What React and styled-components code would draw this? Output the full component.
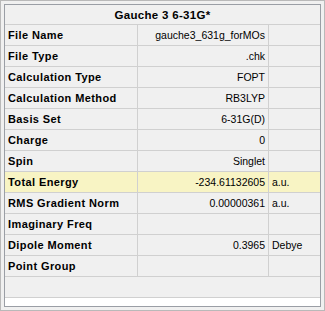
import React from "react";
import styled, { createGlobalStyle } from "styled-components";

const Global = createGlobalStyle`
  html, body { margin: 0; padding: 0; background: #f0f0f0; }
  * { box-sizing: border-box; }
`;

const Frame = styled.div`
  width: 325px;
  height: 311px;
  border: 1px solid #b9b9b9;
  background: #f0f0f0;
  padding: 3px;
`;

const Table = styled.div`
  height: 100%;
  border: 1px solid #9a9ea5;
  background: #ffffff;
  display: flex;
  flex-direction: column;
  font-family: "Liberation Sans", Arial, sans-serif;
  color: #000;
`;

const Header = styled.div`
  height: 20px;
  flex: none;
  display: flex;
  align-items: center;
  justify-content: center;
  background: #f0f0f0;
  border-bottom: 1px solid #d0d0d0;
  font-weight: bold;
  font-size: 11.5px;
  letter-spacing: 0.3px;
`;

const Row = styled.div`
  height: 21px;
  flex: none;
  display: grid;
  grid-template-columns: 133px 131px 1fr;
  background: ${(p) => (p.$hl ? "#f8f4c4" : "#f0f0f0")};
  border-bottom: 1px solid #d0d0d0;
`;

const Label = styled.div`
  display: flex;
  align-items: center;
  padding-left: 3px;
  border-right: 1px solid #d0d0d0;
  font-weight: bold;
  font-size: 11px;
  letter-spacing: 0.4px;
  white-space: nowrap;
`;

const Value = styled.div`
  display: flex;
  align-items: center;
  justify-content: flex-end;
  padding-right: 3px;
  border-right: 1px solid #d0d0d0;
  font-size: 10.5px;
  white-space: nowrap;
`;

const Unit = styled.div`
  display: flex;
  align-items: center;
  padding-left: 3px;
  font-size: 10.5px;
  white-space: nowrap;
`;

const BlankRow = styled.div`
  height: 21px;
  flex: none;
  background: #f0f0f0;
  border-bottom: 1px solid #d0d0d0;
`;

const rows = [
  ["File Name", "gauche3_631g_forMOs", ""],
  ["File Type", ".chk", ""],
  ["Calculation Type", "FOPT", ""],
  ["Calculation Method", "RB3LYP", ""],
  ["Basis Set", "6-31G(D)", ""],
  ["Charge", "0", ""],
  ["Spin", "Singlet", ""],
  ["Total Energy", "-234.61132605", "a.u.", true],
  ["RMS Gradient Norm", "0.00000361", "a.u."],
  ["Imaginary Freq", "", ""],
  ["Dipole Moment", "0.3965", "Debye"],
  ["Point Group", "", ""],
];

export default function App() {
  return (
    <>
      <Global />
      <Frame>
        <Table>
          <Header>Gauche 3 6-31G*</Header>
          {rows.map(([l, v, u, hl]) => (
            <Row key={l} $hl={hl}>
              <Label>{l}</Label>
              <Value>{v}</Value>
              <Unit>{u}</Unit>
            </Row>
          ))}
          <BlankRow />
        </Table>
      </Frame>
    </>
  );
}
